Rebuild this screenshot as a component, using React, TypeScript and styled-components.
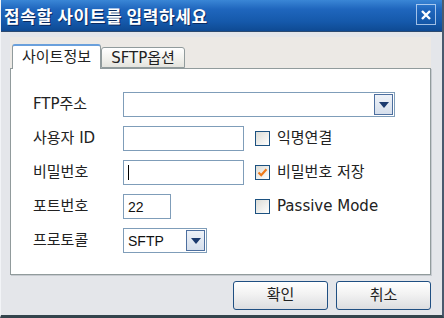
import styled, { createGlobalStyle } from 'styled-components';

const GlobalStyle = createGlobalStyle`
  html, body {
    margin: 0;
    padding: 0;
    overflow: hidden;
    background: #e4e6ea;
  }
  * {
    box-sizing: border-box;
  }
`;

const FONT = `"DejaVu Sans", "Noto Sans CJK KR", sans-serif`;

const Window = styled.div`
  width: 444px;
  height: 318px;
  display: flex;
  flex-direction: column;
  background: #e4e6ea;
  border-left: 1px solid #f2f4f7;
  border-right: 2px solid #4a5a6e;
  border-bottom: 3px solid #33444c;
  font-family: ${FONT};
  color: #222;
`;

const TitleBar = styled.div`
  height: 32px;
  flex-shrink: 0;
  display: flex;
  align-items: center;
  justify-content: space-between;
  padding: 0 6px 0 3px;
  background: linear-gradient(180deg, #3a86d6 0%, #1f66bd 30%, #1559ab 70%, #0e4a93 100%);
  border-bottom: 1px solid #2c4a70;
`;

const Title = styled.div`
  font-family: "Noto Sans CJK KR", sans-serif;
  font-weight: 700;
  font-size: 17px;
  letter-spacing: 0.6px;
  color: #fff;
  text-shadow: 1px 1px 0 #0a2a60;
  line-height: 1;
`;

const CloseButton = styled.div`
  width: 20px;
  height: 21px;
  border: 1px solid rgba(220, 235, 255, 0.7);
  display: flex;
  align-items: center;
  justify-content: center;
  margin-top: -2px;
`;

const Body = styled.div`
  flex: 1;
  display: flex;
  flex-direction: column;
  padding: 5px 11px 0 9px;
`;

const TabStrip = styled.div`
  height: 31px;
  flex-shrink: 0;
  display: flex;
  align-items: flex-end;
  padding-left: 2px;
  background: #ece9e5;
`;

const Tab = styled.div<{ $active?: boolean }>`
  position: relative;
  z-index: ${p => (p.$active ? 1 : 0)};
  width: ${p => (p.$active ? 89 : 84)}px;
  height: ${p => (p.$active ? 25 : 21)}px;
  margin-bottom: ${p => (p.$active ? -1 : 0)}px;
  display: flex;
  align-items: center;
  justify-content: center;
  font-size: 15px;
  line-height: 1;
  color: #222;
  border: 1px solid #919b9c;
  border-bottom: ${p => (p.$active ? 'none' : '1px solid #919b9c')};
  border-top: ${p => (p.$active ? '2px solid #6aa0dc' : '1px solid #919b9c')};
  border-radius: 3px 3px 0 0;
  background: ${p => (p.$active ? '#fff' : 'linear-gradient(180deg, #fff 0%, #f3f3ef 50%, #e4e4de 100%)')};
  padding-top: ${p => (p.$active ? 0 : 1)}px;
`;

const Panel = styled.div`
  height: 207px;
  flex-shrink: 0;
  background: #fff;
  border: 1px solid #919b9c;
  box-shadow: 1px 1px 0 #c6cad0;
  padding: 23px 0 0 22px;
`;

const Form = styled.div`
  display: grid;
  grid-template-columns: 90px 132px auto;
  grid-auto-rows: 25px;
  row-gap: 9px;
  align-items: center;
`;

const Label = styled.div`
  font-size: 15px;
  line-height: 1;
  color: #222;
`;

const Field = styled.div<{ $width: number; $span?: boolean }>`
  width: ${p => p.$width}px;
  height: 25px;
  grid-column: ${p => (p.$span ? '2 / span 2' : 'auto')};
  border: 1px solid #7f9db9;
  background: #fff;
  display: flex;
  align-items: center;
  padding: 1px 1px 1px 3px;
  font-family: "Liberation Sans", sans-serif;
  font-size: 14px;
  color: #111;
`;

const FieldText = styled.span`
  flex: 1;
  padding-left: 1px;
`;

const Caret = styled.span`
  width: 1px;
  height: 15px;
  background: #000;
  margin-left: 1px;
`;

const DropButton = styled.div`
  width: 19px;
  height: 21px;
  border: 1px solid #4d6f9f;
  background: linear-gradient(180deg, #eef2f8 0%, #d6dfec 100%);
  display: flex;
  align-items: center;
  justify-content: center;
`;

const CheckRow = styled.div`
  display: flex;
  align-items: center;
  gap: 7px;
  font-size: 15px;
  line-height: 1;
  color: #222;
`;

const Box = styled.div`
  width: 15px;
  height: 15px;
  border: 1px solid #1c5180;
  background: linear-gradient(135deg, #dcdcd6 0%, #f4f4f2 70%, #fff 100%);
  display: flex;
  align-items: center;
  justify-content: center;
`;

const Footer = styled.div`
  display: flex;
  justify-content: flex-end;
  gap: 8px;
  padding-top: 6px;
`;

const Button = styled.div`
  width: 95px;
  height: 29px;
  border: 1px solid #1f4f82;
  border-radius: 3px;
  background: linear-gradient(180deg, #ffffff 0%, #f2f2f2 45%, #dcdde0 100%);
  display: flex;
  align-items: center;
  justify-content: center;
  font-size: 15px;
  line-height: 1;
  color: #222;
`;

const Arrow = () => (
  <svg width="10" height="6" viewBox="0 0 10 6">
    <path d="M0 0 H10 L5 6 Z" fill="#1b3a6e" />
  </svg>
);

const CheckBox = ({ checked, label }: { checked?: boolean; label: string }) => (
  <CheckRow>
    <Box>
      {checked && (
        <svg width="11" height="11" viewBox="0 0 11 11">
          <path d="M1.5 5.5 L4.2 8.2 L9.5 2.2" stroke="#ee7a1c" strokeWidth="2.2" fill="none" />
        </svg>
      )}
    </Box>
    {label}
  </CheckRow>
);

export default function App() {
  return (
    <>
      <GlobalStyle />
      <Window>
        <TitleBar>
          <Title>접속할 사이트를 입력하세요</Title>
          <CloseButton>
            <svg width="10" height="10" viewBox="0 0 10 10">
              <path d="M1 1 L9 9 M9 1 L1 9" stroke="#fff" strokeWidth="2.4" />
            </svg>
          </CloseButton>
        </TitleBar>
        <Body>
          <TabStrip>
            <Tab $active>사이트정보</Tab>
            <Tab>SFTP옵션</Tab>
          </TabStrip>
          <Panel>
            <Form>
              <Label>FTP주소</Label>
              <Field $width={272} $span>
                <FieldText />
                <DropButton><Arrow /></DropButton>
              </Field>

              <Label>사용자 ID</Label>
              <Field $width={121} />
              <CheckBox label="익명연결" />

              <Label>비밀번호</Label>
              <Field $width={121}><Caret /></Field>
              <CheckBox checked label="비밀번호 저장" />

              <Label>포트번호</Label>
              <Field $width={48}><FieldText>22</FieldText></Field>
              <CheckBox label="Passive Mode" />

              <Label>프로토콜</Label>
              <Field $width={84}>
                <FieldText>SFTP</FieldText>
                <DropButton><Arrow /></DropButton>
              </Field>
            </Form>
          </Panel>
          <Footer>
            <Button>확인</Button>
            <Button>취소</Button>
          </Footer>
        </Body>
      </Window>
    </>
  );
}
